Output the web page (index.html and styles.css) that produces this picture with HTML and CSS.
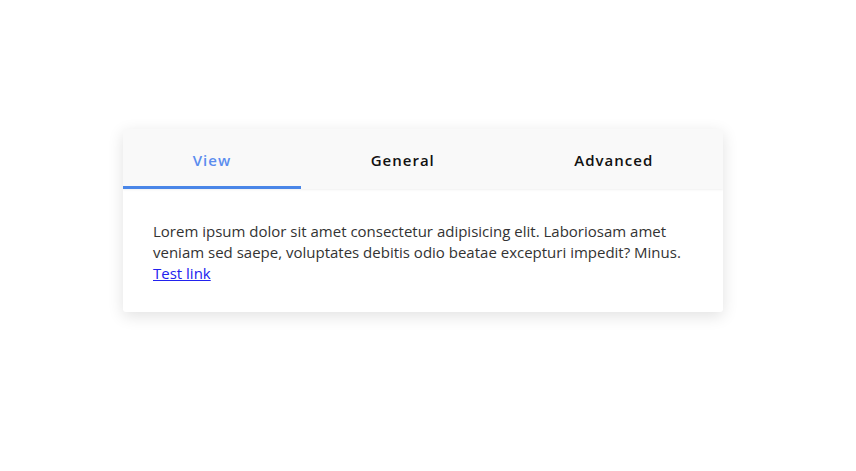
FILE: index.html
```html
<!DOCTYPE html>
<html>
<head>
<meta charset="utf-8">
<link rel="stylesheet" href="styles.css">
</head>
<body>
<div class="page">
  <div class="card">
    <div class="tabs">
      <div class="tab active">View</div>
      <div class="tab">General</div>
      <div class="tab">Advanced</div>
    </div>
    <div class="content">
      Lorem ipsum dolor sit amet consectetur adipisicing elit. Laboriosam amet veniam sed saepe, voluptates debitis odio beatae excepturi impedit? Minus. <a href="#">Test link</a>
    </div>
  </div>
</div>
</body>
</html>
```
FILE: styles.css
```css
html, body {
  margin: 0;
  padding: 0;
  background: #fff;
}
.page {
  padding: 129px 0 120px 123px;
  display: flex;
  font-family: "Open Sans", "Noto Sans", sans-serif;
}
.card {
  width: 600px;
  background: #fff;
  border-radius: 3px;
  box-shadow: 0 4px 16px rgba(0,0,0,0.12);
  overflow: hidden;
}
.tabs {
  display: flex;
  background: #f9f9f9;
  box-shadow: 0 1px 2px rgba(0,0,0,0.06);
}
.tab {
  flex: 1 1 auto;
  text-align: center;
  height: 57px;
  line-height: 63px;
  font-size: 15px;
  font-weight: 600;
  letter-spacing: 1px;
  color: #111;
  border-bottom: 3px solid transparent;
}
.tab.active {
  color: #5b8def;
  border-bottom-color: #4a86e8;
}
.content {
  padding: 32px 30px 28px;
  font-size: 15px;
  line-height: 21px;
  color: #333;
}
.content a {
  color: #2222ee;
}
```
